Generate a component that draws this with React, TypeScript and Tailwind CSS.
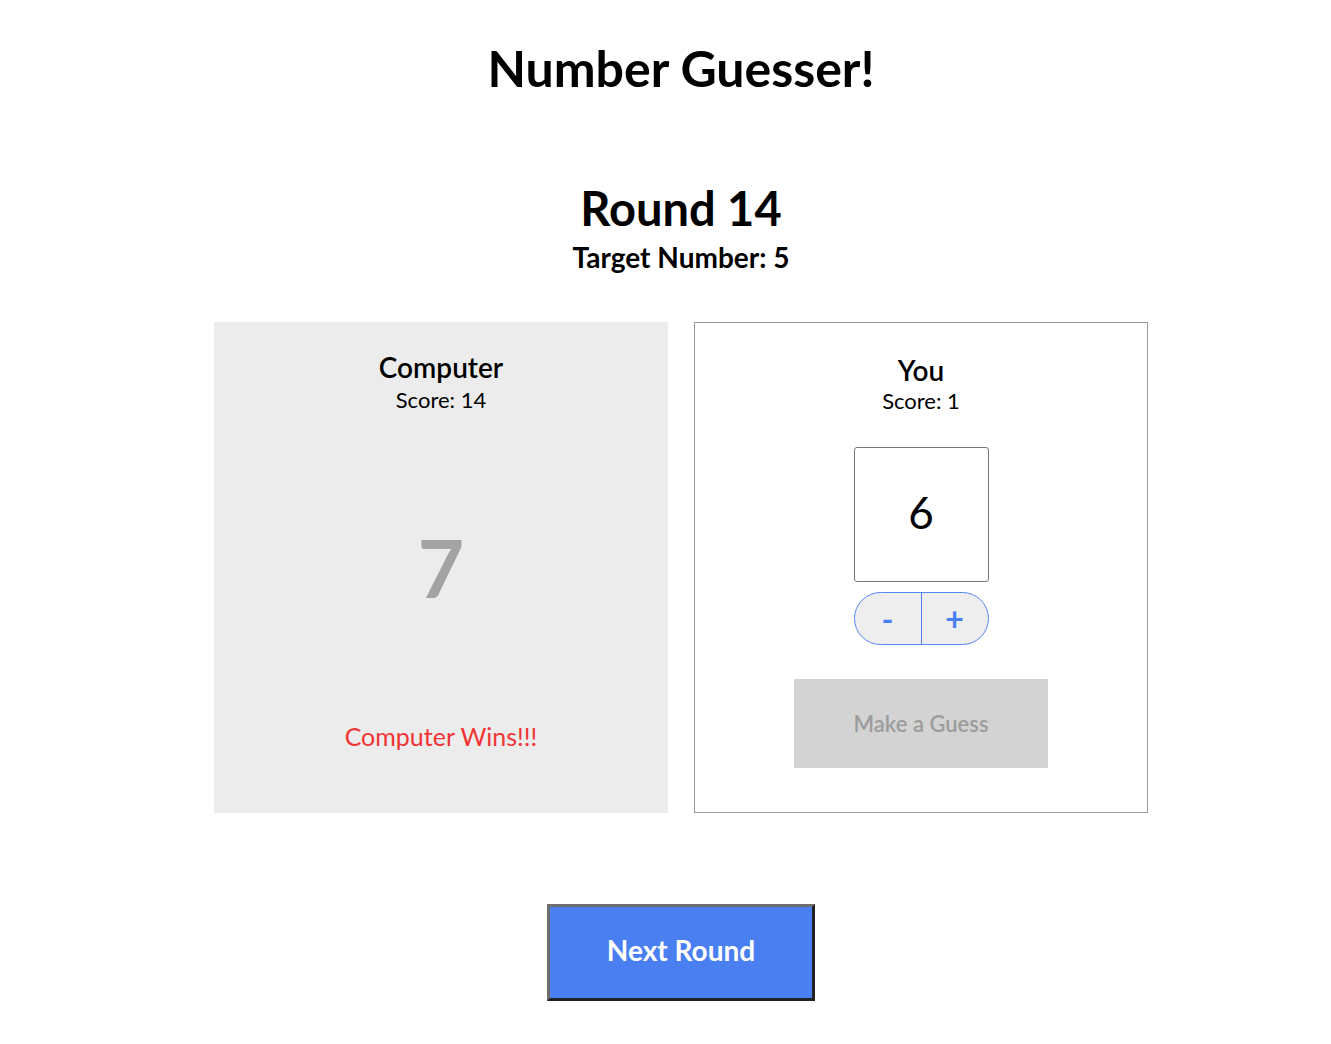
import React from "react";

export default function App() {
  return (
    <div className="flex flex-col items-center bg-white text-black min-h-[1044px] pl-[31px]" style={{ fontFamily: "Lato, 'Noto Sans', sans-serif" }}>
      <h1 className="mt-[37px] text-[50px] leading-[62px] font-bold">Number Guesser!</h1>
      <h2 className="mt-[80px] text-[47px] leading-[58px] font-bold">Round 14</h2>
      <div className="mt-[3px] text-[28px] leading-[34px] font-bold">Target Number: 5</div>
      <div className="mt-[48px] flex gap-[26px]">
        <div className="w-[454px] h-[491px] bg-[#ececec] flex flex-col items-center">
          <div className="mt-[28px] text-[28px] leading-[34px] font-semibold">Computer</div>
          <div className="mt-[2px] text-[22px] leading-[28px]">Score: 14</div>
          <div className="mt-[108px] text-[80px] leading-[90px] font-bold text-[#a3a3a3]">7</div>
          <div className="mt-[109px] text-[25px] leading-[30px] text-[#ef3434]">Computer Wins!!!</div>
        </div>
        <div className="w-[454px] h-[491px] border border-[#999] flex flex-col items-center">
          <div className="mt-[30px] text-[28px] leading-[34px] font-semibold">You</div>
          <div className="text-[22px] leading-[28px]">Score: 1</div>
          <div className="mt-[32px] w-[135px] h-[135px] border border-[#777] rounded-[3px] flex items-center justify-center text-[44px] font-normal pb-[6px]">6</div>
          <div className="mt-[10px] w-[135px] h-[53px] rounded-full border border-[#5586f2] bg-[#eeeeee] flex overflow-hidden">
            <div className="flex-1 flex items-center justify-center text-[#4a7ff0] text-[32px] font-bold border-r border-[#4a7ff0]">-</div>
            <div className="flex-1 flex items-center justify-center text-[#4a7ff0] text-[32px] font-bold">+</div>
          </div>
          <div className="mt-[34px] w-[254px] h-[89px] bg-[#d3d3d3] flex items-center justify-center text-[22px] font-semibold text-[#9c9c9c]">Make a Guess</div>
        </div>
      </div>
      <div className="mt-[91px] w-[268px] h-[97px] bg-[#4a7ff2] border-[3px] border-t-[#6e6e6e] border-l-[#6e6e6e] border-b-[#222] border-r-[#222] flex items-center justify-center text-white text-[28px] font-bold pb-[5px]">Next Round</div>
    </div>
  );
}
